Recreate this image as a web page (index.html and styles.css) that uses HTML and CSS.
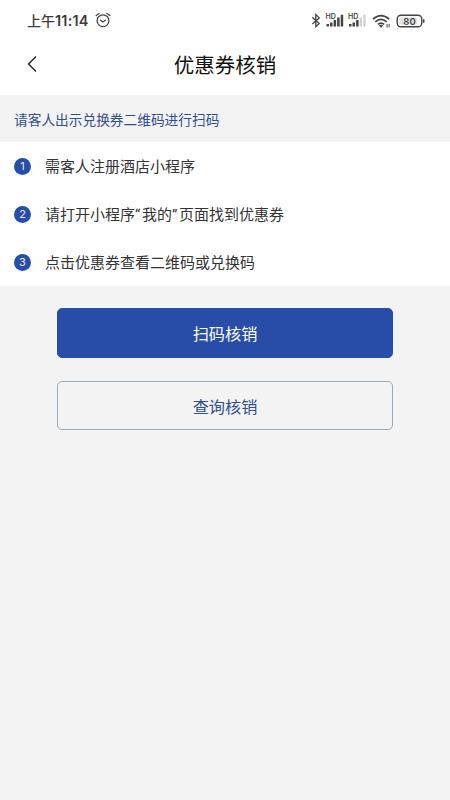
FILE: index.html
```html
<!DOCTYPE html>
<html lang="zh-CN">
<head>
<meta charset="UTF-8">
<title>优惠券核销</title>
<link rel="stylesheet" href="styles.css">
</head>
<body>
<header class="header">
  <div class="status">
    <span class="time">上午<span class="digits">11:14</span></span>
    <svg class="alarm" width="16" height="16" viewBox="0 0 16 16" fill="none" stroke="#484848" stroke-width="1.3" stroke-linecap="round"><circle cx="8" cy="8.700" r="5.900"/><path d="M1.200 3.600 4 1.400M14.800 3.600 12 1.400M5.700 8.200 8 10l2.500-1.800"/></svg>
    <svg class="signals" width="116" height="18" viewBox="0 0 116 18" fill="none" stroke="#444">
      <path d="M2.300 6.200 9.200 12.500 5.800 15.800V3.600L9.200 6.900 2.300 13" stroke-width="1.300"/>
      <g fill="#444" stroke="none">
        <path d="M16.500 13H19v2.500h-2.500zM20 11.500h2.500v4H20zM23.600 9h2.500v6.500h-2.500zM27.100 6.500h2.500v9h-2.500zM30.700 3.800h2.500v11.700h-2.500zM39 13h2.500v2.500H39zM42.500 11.500H45v4h-2.500zM46.100 9h2.500v6.500h-2.500z"/>
        <path fill="#d0d0d0" d="M49.700 6.500h2.300v9h-2.300zM53.300 3.800h2.300v11.700h-2.300z"/>
        <text class="hd" x="15.500" y="7.900">HD</text>
        <text class="hd" x="38" y="7.900">HD</text>
      </g>
      <path d="M63 8.200Q71 1.200 79.200 8.200M65.300 10.900q5.700-5 11.400 0M67.800 13.400q3.200-2.700 6.400 0" stroke-width="1.700"/>
      <path d="m71 16.800-2.200-2.200q2.200-1.500 4.400 0z" fill="#444" stroke="none"/>
      <path d="M77 16.500v-3.500M79.100 12.800v3.500" stroke-width="1"/>
      <rect x="87.200" y="4.200" width="24.600" height="11.600" rx="3.800" stroke-width="1.400"/>
      <path d="M113.700 8.300v3.400" stroke-width="1.600"/>
      <rect x="89.200" y="6.200" width="18" height="7.600" rx="1.800" fill="#e4e4e4" stroke="none"/>
      <text class="battery" x="99.500" y="13.500" text-anchor="middle" fill="#444" stroke="none">80</text>
    </svg>
  </div>
  <nav class="nav">
    <svg class="back" width="10" height="18" viewBox="0 0 10 18" fill="none" stroke="#333" stroke-width="1.700" stroke-linecap="round" stroke-linejoin="round"><path d="M8.500 2 1.500 9l7 7"/></svg>
    <h1 class="title">优惠券核销</h1>
  </nav>
</header>
<p class="notice">请客人出示兑换券二维码进行扫码</p>
<ol class="steps">
  <li class="step"><span class="num">1</span><span>需客人注册酒店小程序</span></li>
  <li class="step"><span class="num">2</span><span>请打开小程序<span class="quote">“</span>我的<span class="quote">”</span>页面找到优惠券</span></li>
  <li class="step"><span class="num">3</span><span>点击优惠券查看二维码或兑换码</span></li>
</ol>
<main class="actions">
  <button class="btn primary">扫码核销</button>
  <button class="btn outline">查询核销</button>
</main>
</body>
</html>
```
FILE: styles.css
```css
* { box-sizing: border-box; }
body {
  margin: 0;
  min-height: 800px;
  background: #f3f3f3;
  color: #333;
  font-family: "Noto Sans CJK SC", sans-serif;
}
.header { height: 95px; background: #fff; }
.status {
  height: 40px;
  padding: 0 24px 0 27px;
  display: flex;
  align-items: center;
}
.time { font-size: 14px; font-weight: 500; line-height: 20px; color: #3c3c3c; }
.digits { font-family: Inter, sans-serif; font-size: 14.5px; font-weight: 600; letter-spacing: 0.2px; }
.alarm { margin-left: 6px; }
.signals { margin-left: auto; }
.hd { font: 600 7px Inter, sans-serif; }
.battery { font: 600 9.5px Inter, sans-serif; }
.nav {
  height: 47px;
  padding: 0 27px;
  display: grid;
  grid-template-columns: 10px 1fr 10px;
  align-items: center;
}
.title {
  margin: 0;
  font-size: 20.5px;
  font-weight: 400;
  line-height: 30px;
  text-align: center;
  color: #111;
}
.notice {
  margin: 0;
  height: 47px;
  padding-left: 14px;
  font-size: 13.7px;
  line-height: 48px;
  color: #304f91;
}
.steps { margin: 0; padding: 0; list-style: none; background: #fff; height: 144px; }
.step {
  height: 48px;
  padding-left: 14px;
  display: flex;
  align-items: center;
  gap: 14px;
  font-size: 15px;
  line-height: 24px;
}
.num {
  width: 17px;
  height: 17px;
  border-radius: 50%;
  background: #284da8;
  color: #e6ecfa;
  font: 11px/17px Inter, sans-serif;
  text-align: center;
}
.quote { font-family: Roboto, sans-serif; letter-spacing: 1.6px; }
.actions {
  padding: 22px 57px 0;
  display: flex;
  flex-direction: column;
  gap: 23px;
}
.btn {
  height: 49px;
  padding: 0;
  border: 1px solid #284da8;
  border-radius: 5px;
  font-family: inherit;
  font-size: 16.2px;
  line-height: 24px;
}
.primary { height: 50px; background: #284da8; color: #fff; }
.outline { background: transparent; border-color: #9aa9bc; color: #304f91; }
```
